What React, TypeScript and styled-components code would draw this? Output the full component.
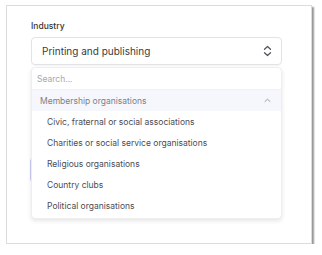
import React from "react";
import styled, { createGlobalStyle } from "styled-components";

const Global = createGlobalStyle`
  html, body { margin: 0; padding: 0; background: #ffffff; }
  body { font-family: Inter, "Noto Sans", sans-serif; }
`;

const Card = styled.div`
  margin: 5px 0 0 6px;
  width: 306px;
  height: 239px;
  box-sizing: border-box;
  background: #fff;
  border: 1px solid #dcdcdc;
  box-shadow: 2px 2px 1.5px rgba(0, 0, 0, 0.4);
  padding: 14px 29px 0 24px;
`;

const Label = styled.div`
  font-size: 8.5px;
  font-weight: 500;
  color: #333;
  line-height: 12px;
  margin-bottom: 5px;
`;

const Field = styled.div`
  position: relative;
`;

const Select = styled.div`
  height: 28px;
  box-sizing: border-box;
  border: 1px solid #e3e3e6;
  border-radius: 4px;
  display: flex;
  align-items: center;
  justify-content: space-between;
  padding: 0 9px 0 10px;
  font-size: 10px;
  color: #3a3a3c;
  box-shadow: 0 1px 1px rgba(0, 0, 0, 0.04);
`;

const Ghost = styled.div`
  margin-top: 92px;
  height: 26px;
  border: 1px solid #c9cbf3;
  border-radius: 4px;
  box-sizing: border-box;
  margin-left: -1px;
`;

const Dropdown = styled.div`
  position: absolute;
  top: 30px;
  left: 0;
  right: 0;
  background: #fff;
  border: 1px solid #eeeeef;
  border-radius: 4px;
  box-shadow: 0 2px 4px rgba(0, 0, 0, 0.1);
  padding-bottom: 2px;
`;

const Search = styled.div`
  height: 22px;
  display: flex;
  align-items: center;
  padding-left: 5px;
  font-size: 8.5px;
  color: #a6a8ad;
  border-bottom: 1px solid #f0f1f4;
  box-sizing: border-box;
`;

const GroupHeader = styled.div`
  height: 21px;
  display: flex;
  align-items: center;
  justify-content: space-between;
  padding: 0 10px 0 8px;
  background: #f5f7fc;
  font-size: 8.5px;
  color: #7c7f88;
`;

const Item = styled.div`
  height: 21px;
  display: flex;
  align-items: center;
  padding-left: 15px;
  font-size: 8.5px;
  color: #4a4c55;
`;

const items = [
  "Civic, fraternal or social associations",
  "Charities or social service organisations",
  "Religious organisations",
  "Country clubs",
  "Political organisations",
];

export default function App() {
  return (
    <>
      <Global />
      <Card>
        <Label>Industry</Label>
        <Field>
          <Select>
            <span>Printing and publishing</span>
            <svg width="9" height="12" viewBox="0 0 9 12" fill="none" stroke="#55575e" strokeWidth="1.3" strokeLinecap="round" strokeLinejoin="round">
              <path d="M1.5 4.2 L4.5 1.5 L7.5 4.2" />
              <path d="M1.5 7.8 L4.5 10.5 L7.5 7.8" />
            </svg>
          </Select>
          <Ghost />
          <Dropdown>
            <Search>Search...</Search>
            <GroupHeader>
              <span>Membership organisations</span>
              <svg width="7" height="5" viewBox="0 0 7 5" fill="none" stroke="#9a9ca3" strokeWidth="1" strokeLinecap="round" strokeLinejoin="round">
                <path d="M1 3.5 L3.5 1.2 L6 3.5" />
              </svg>
            </GroupHeader>
            {items.map((t) => (
              <Item key={t}>{t}</Item>
            ))}
          </Dropdown>
        </Field>
      </Card>
    </>
  );
}
